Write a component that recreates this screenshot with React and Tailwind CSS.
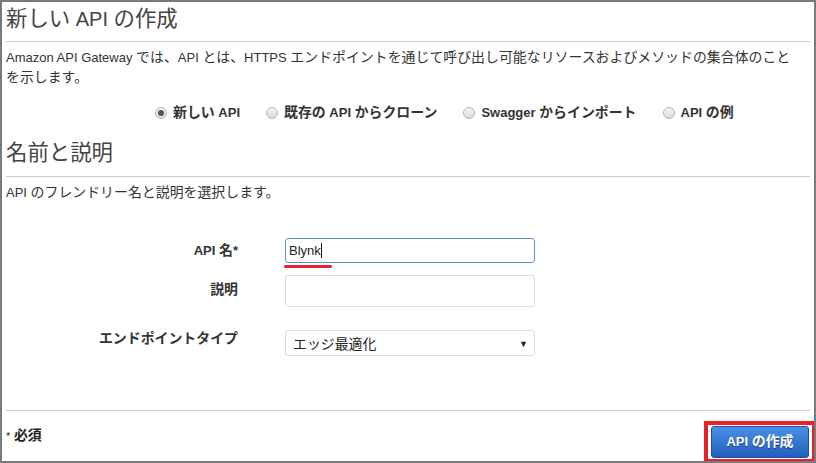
import React from 'react';

const font = { fontFamily: '"Liberation Sans", "Noto Sans CJK JP", sans-serif' };

// kana/kanji runs render a little wider than the latin text in the original
const J = ({ children }) =>
    String(children)
        .split(/([\u3000-\u30ff\u4e00-\u9fff\uff00-\uffef]+)/)
        .map((part, i) =>
            i % 2 ? (
                <span key={i} className="text-[1.07em] leading-none">
                    {part}
                </span>
            ) : (
                part
            )
        );

const Radio = ({ checked, label }) => (
    <label className="flex items-center gap-[6px] font-bold text-[13px] text-[#333]">
        <span className="w-[12px] h-[12px] rounded-full border border-[#b5b5b5] bg-gradient-to-b from-[#f4f4f4] to-[#dcdcdc] flex items-center justify-center">
            {checked && <span className="w-[6px] h-[6px] rounded-full bg-[#555]"></span>}
        </span>
        <span>
            <J>{label}</J>
        </span>
    </label>
);

const App = () => {
    return (
        <div style={font} className="w-[816px] h-[463px] border-2 border-[#7a7a7a] bg-white flex flex-col overflow-hidden text-[#333]">
            {/* header */}
            <div className="pl-[4px] pr-[4px]">
                <h1 className="mt-[3px] text-[20px] leading-[28px] text-[#444]">
                    <J>新しい API の作成</J>
                </h1>
                <div className="mt-[8px] h-px bg-[#cccccc]"></div>
                <p className="mt-[6px] text-[13px] leading-[20px] pr-[10px]">
                    <J>Amazon API Gateway では、API とは、HTTPS エンドポイントを通じて呼び出し可能なリソースおよびメソッドの集合体のことを示します。</J>
                </p>
                <div className="mt-[15px] h-[20px] flex items-center pl-[149px] gap-[26px]">
                    <Radio checked label="新しい API" />
                    <Radio label="既存の API からクローン" />
                    <Radio label="Swagger からインポート" />
                    <Radio label="API の例" />
                </div>

                <h2 className="mt-[16px] text-[20px] leading-[28px] text-[#444]">
                    <J>名前と説明</J>
                </h2>
                <div className="mt-[9px] h-px bg-[#cccccc]"></div>
                <p className="mt-[6px] text-[13px] leading-[20px]">
                    <J>API のフレンドリー名と説明を選択します。</J>
                </p>

                {/* form */}
                <div className="mt-[35px] grid grid-cols-[232px_250px] gap-x-[47px] text-[13px]">
                    <div className="text-right font-bold pt-[5px] leading-[16px]">
                        <J>API 名*</J>
                    </div>
                    <div className="relative">
                        <div className="h-[25px] border border-[#5b93d9] rounded-[3px] flex items-center pl-[3px] text-[#222]">
                            Blynk<span className="w-px h-[15px] bg-[#111]"></span>
                        </div>
                        <div className="mt-[2px] -ml-[1px] w-[48px] h-[3px] rounded-full bg-[#e8202a]"></div>
                    </div>

                    <div className="mt-[7px] text-right font-bold pt-[7px] leading-[16px]">
                        <J>説明</J>
                    </div>
                    <div className="mt-[7px] h-[32px] border border-[#dcdcdc] rounded-[3px]"></div>

                    <div className="mt-[23px] text-right font-bold pt-[1px] leading-[16px]">
                        <J>エンドポイントタイプ</J>
                    </div>
                    <div className="mt-[23px] h-[26px] border border-[#dcdcdc] rounded-[3px] flex items-center justify-between pl-[7px] pr-[6px] pt-[3px]">
                        <span className="text-[#222]">
                            <J>エッジ最適化</J>
                        </span>
                        <span className="text-[9px] text-[#222]">▼</span>
                    </div>
                </div>
            </div>

            {/* footer */}
            <div className="mt-auto pl-[4px]">
                <div className="mr-[4px] h-px bg-[#cccccc]"></div>
                <div className="flex items-start justify-between">
                    <div className="mt-[17px] text-[13px] font-bold leading-[16px] text-[#222]">
                        <span className="font-normal text-[11px] align-top">*</span> <J>必須</J>
                    </div>
                    <div className="mt-[10px] -mr-[2px] -mb-[2px] border-[4px] border-[#e8202a] px-[3px] py-[1px] relative">
                        <button className="w-[98px] h-[32px] rounded-[3px] border border-[#1d4f9a] bg-gradient-to-b from-[#4a90e6] to-[#2160bd] text-white font-bold text-[13px] [text-shadow:0_1px_1px_rgba(0,0,0,0.45)]">
                            <J>API の作成</J>
                        </button>
                    </div>
                </div>
            </div>
        </div>
    );
};

export default App;
